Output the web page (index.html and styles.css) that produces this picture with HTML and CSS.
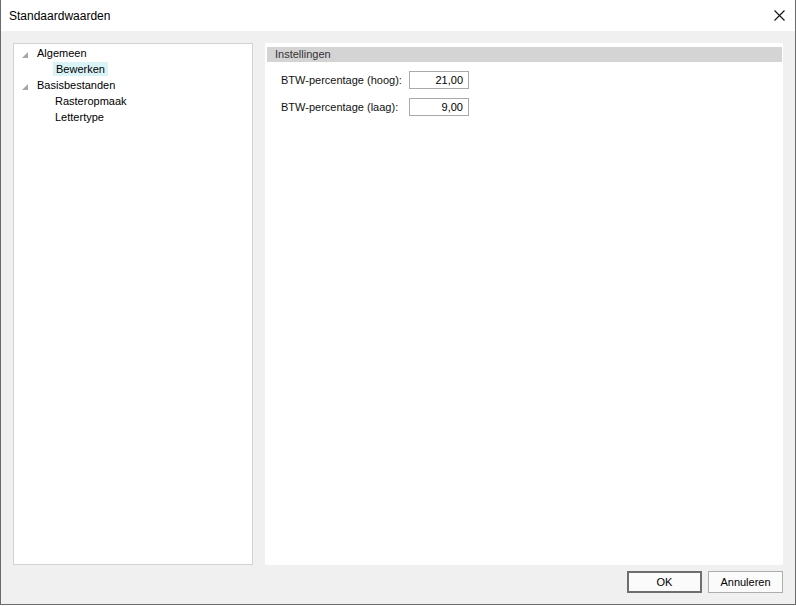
FILE: index.html
```html
<!DOCTYPE html>
<html>
<head>
<meta charset="utf-8">
<link rel="stylesheet" href="styles.css">
</head>
<body>
<div class="window">
  <div class="titlebar">
    <span class="title">Standaardwaarden</span>
    <svg class="close" width="12" height="12" viewBox="0 0 12 12"><path d="M0.5 0.5 L10.5 10.5 M10.5 0.5 L0.5 10.5" stroke="#111" stroke-width="1.1" fill="none"/></svg>
  </div>
  <div class="body">
    <div class="panels">
      <div class="tree">
        <div class="node">
          <svg class="arrow" width="6" height="6" viewBox="0 0 6 6"><path d="M6 0 L6 6 L0 6 Z" fill="#a6a6a6"/></svg>
          <span class="label">Algemeen</span>
        </div>
        <div class="node child"><span class="label selected">Bewerken</span></div>
        <div class="node">
          <svg class="arrow" width="6" height="6" viewBox="0 0 6 6"><path d="M6 0 L6 6 L0 6 Z" fill="#a6a6a6"/></svg>
          <span class="label">Basisbestanden</span>
        </div>
        <div class="node child"><span class="label">Rasteropmaak</span></div>
        <div class="node child"><span class="label">Lettertype</span></div>
      </div>
      <div class="settings">
        <div class="header">Instellingen</div>
        <div class="form">
          <label class="field-label">BTW-percentage (hoog):</label>
          <div class="input">21,00</div>
          <label class="field-label">BTW-percentage (laag):</label>
          <div class="input">9,00</div>
        </div>
      </div>
    </div>
    <div class="buttons">
      <button class="btn default">OK</button>
      <button class="btn">Annuleren</button>
    </div>
  </div>
</div>
</body>
</html>
```
FILE: styles.css
```css
* { box-sizing: border-box; }
html, body { margin: 0; padding: 0; background: #ffffff; }
body {
  width: 796px;
  height: 606px;
  overflow: hidden;
  font-family: "Liberation Sans", Arial, sans-serif;
  font-size: 11px;
  color: #000;
}
.window {
  width: 796px;
  height: 605px;
  border-left: 1px solid #6b6b6b;
  border-right: 1px solid #6b6b6b;
  border-bottom: 1px solid #6b6b6b;
  display: flex;
  flex-direction: column;
  background: #f0f0f0;
}
.titlebar {
  height: 31px;
  background: #ffffff;
  display: flex;
  align-items: center;
  justify-content: space-between;
  padding: 0 9px 0 8px;
  flex: none;
}
.title {
  font-family: "Liberation Sans", Arial, sans-serif;
  font-size: 12px;
  color: #000;
  padding-top: 1px;
}
.close { display: block; margin-top: 0; }
.body {
  flex: 1;
  display: flex;
  flex-direction: column;
  padding: 12px 12px 11px 12px;
}
.panels {
  flex: 1;
  display: flex;
  gap: 12px;
}
.tree {
  width: 240px;
  background: #fff;
  border: 1px solid #d2d2d2;
  padding-top: 1px;
}
.node {
  height: 16px;
  display: flex;
  align-items: center;
  padding-left: 8px;
}
.node .arrow { margin-right: 7px; margin-top: 4px; flex: none; }
.node.child { padding-left: 39px; }
.label { padding: 1px 2px; line-height: 12px; }
.label.selected { background: #d9f3f7; padding: 1px 3px; }
.settings {
  flex: 1;
  background: #fff;
  padding: 4px 1px 0 2px;
}
.header {
  height: 15px;
  background: #d4d4d4;
  color: #333;
  padding-left: 8px;
  line-height: 15px;
}
.form {
  display: grid;
  grid-template-columns: 128px 60px;
  row-gap: 9px;
  padding: 9px 0 0 14px;
  align-items: center;
}
.field-label { color: #111; }
.input {
  height: 18px;
  border: 1px solid #a9a9a9;
  background: #fff;
  text-align: right;
  padding-right: 5px;
  line-height: 16px;
  color: #000;
}
.buttons {
  flex: none;
  display: flex;
  justify-content: flex-end;
  gap: 6px;
  margin-top: 6px;
}
.btn {
  width: 75px;
  height: 22px;
  font-family: "Liberation Sans", Arial, sans-serif;
  font-size: 11px;
  color: #000;
  background: #fbfbfb;
  border: 1px solid #adadad;
  padding: 0;
  margin: 0;
}
.btn.default {
  border: 2px solid #6e6e6e;
}
```
